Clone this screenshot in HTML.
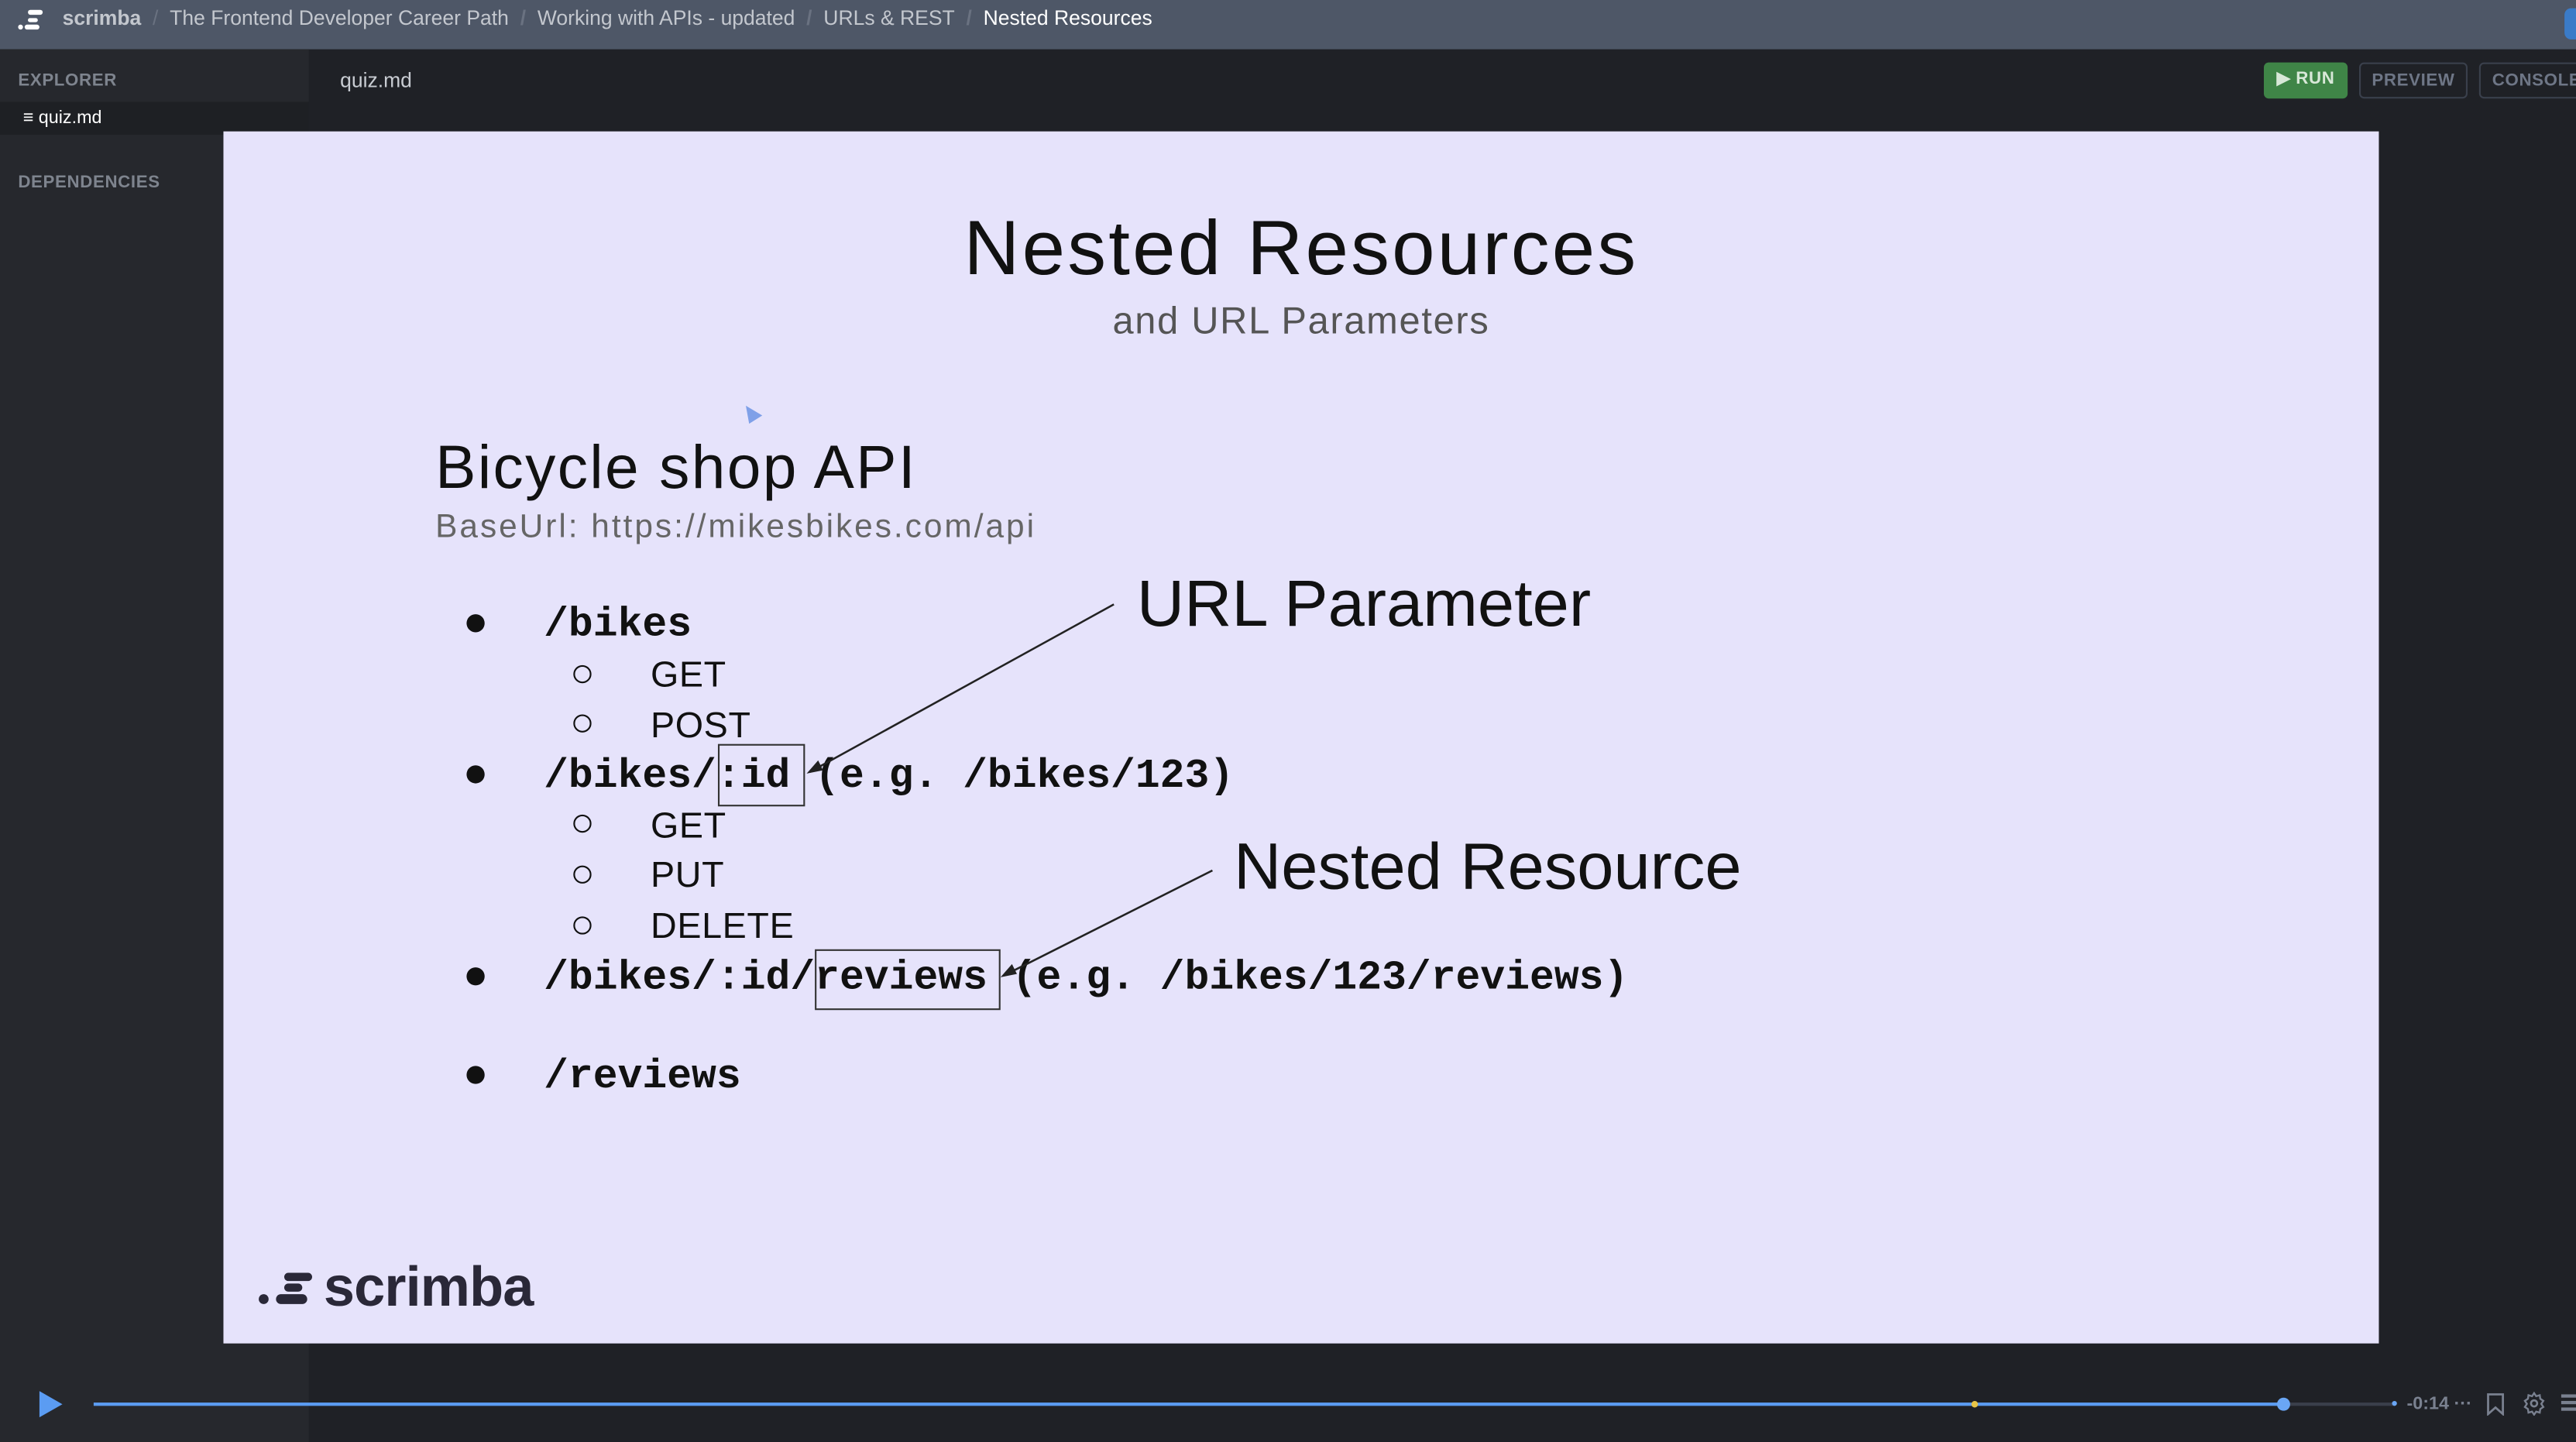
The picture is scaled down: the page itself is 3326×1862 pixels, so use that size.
<!DOCTYPE html>
<html><head><meta charset="utf-8"><style>
*{margin:0;padding:0;box-sizing:border-box}
html,body{width:3326px;height:1862px;overflow:hidden;background:#1f2126}
#w{position:absolute;left:0;top:0;width:1568px;height:878px;transform:scale(2.12117,2.1207);transform-origin:0 0;font-family:"Liberation Sans",sans-serif;background:#1f2126}
.a{position:absolute;white-space:nowrap}
.top{left:0;top:0;width:1568px;height:30px;background:#4e5767}
.bc{top:4px;font-size:12.5px;color:#b3b8c2}
.sep{color:#6a7281}
.side{left:0;top:30px;width:188px;height:848px;background:#26282d}
.lbl{font-size:10.5px;font-weight:bold;color:#7e848e;letter-spacing:.3px}
.btn{top:38px;height:22px;border-radius:3px;font-size:10.5px;font-weight:bold;line-height:20px;text-align:center;letter-spacing:.3px}
.slide{left:136px;top:80px;width:1312px;height:738px;background:#e6e3fb;overflow:hidden}
.m{font-family:"Liberation Mono",monospace;font-weight:bold;font-size:25px;color:#111}
.s{font-size:22px;color:#111;letter-spacing:.3px}
.dot{width:11px;height:11px;border-radius:50%;background:#111}
.cir{width:11px;height:11px;border-radius:50%;border:1.3px solid #111}
</style></head><body><div id="w">
<div class="a top"></div>
<svg class="a" style="left:11px;top:5px" width="20" height="14" viewBox="0 0 20 14"><rect x="6" y="1" width="9" height="3" rx="1.5" fill="#fff"/><rect x="6" y="6" width="6" height="2.5" rx="1.2" fill="#fff"/><rect x="4" y="10" width="9" height="3" rx="1.5" fill="#fff"/><circle cx="1.5" cy="11.5" r="1.5" fill="#fff"/></svg>
<div class="a bc" style="left:38px;font-weight:bold;color:#c3c7ce">scrimba <span class="sep" style="font-weight:normal">&nbsp;/&nbsp;</span> <span style="font-weight:normal">The Frontend Developer Career Path</span> <span class="sep">&nbsp;/&nbsp;</span> <span style="font-weight:normal">Working with APIs - updated</span> <span class="sep">&nbsp;/&nbsp;</span> <span style="font-weight:normal">URLs &amp; REST</span> <span class="sep">&nbsp;/&nbsp;</span> <span style="font-weight:normal;color:#fff">Nested Resources</span></div>
<div class="a" style="left:1561px;top:5px;width:12px;height:19px;border-radius:4px;background:#3a7bc8"></div>
<div class="a side"></div>
<div class="a" style="left:0;top:62px;width:188px;height:20px;background:#1e2024"></div>
<div class="a lbl" style="left:11px;top:43px">EXPLORER</div>
<div class="a" style="left:14px;top:66px;font-size:11px;color:#fff">≡ quiz.md</div>
<div class="a lbl" style="left:11px;top:105px">DEPENDENCIES</div>
<div class="a" style="left:207px;top:42px;font-size:12.5px;color:#c8ccd2">quiz.md</div>
<div class="a btn" style="left:1378px;width:51px;background:#3f8547;color:#d8e8d8">▶ RUN</div>
<div class="a btn" style="left:1436px;width:66px;border:1px solid #3a404c;color:#6e7686">PREVIEW</div>
<div class="a btn" style="left:1509px;width:70px;border:1px solid #3a404c;color:#6e7686">CONSOLE</div>

<div class="a slide">
  <div class="a" style="left:0;width:1312px;top:43px;text-align:center;font-size:47px;letter-spacing:1.5px;color:#111">Nested Resources</div>
  <div class="a" style="left:0;width:1312px;top:102px;text-align:center;font-size:23px;letter-spacing:.8px;color:#555">and URL Parameters</div>
  <svg class="a" style="left:317px;top:166px" width="12" height="14"><path d="M1 1L11 7L3 12Z" fill="#7fa0e8"/></svg>
  <div class="a" style="left:129px;top:184px;font-size:37px;letter-spacing:1.1px;color:#111">Bicycle shop API</div>
  <div class="a" style="left:129px;top:230px;font-size:20px;letter-spacing:1.4px;color:#666">BaseUrl: https://mikesbikes.com/api</div>

  <div class="a dot" style="left:148px;top:294px"></div>
  <div class="a m" style="left:195px;top:286px">/bikes</div>
  <div class="a cir" style="left:213px;top:325px"></div><div class="a s" style="left:260px;top:318px">GET</div>
  <div class="a cir" style="left:213px;top:355px"></div><div class="a s" style="left:260px;top:349px">POST</div>
  <div class="a dot" style="left:148px;top:386px"></div>
  <div class="a m" style="left:195px;top:378px">/bikes/:id (e.g. /bikes/123)</div>
  <div class="a" style="left:301px;top:373px;width:53px;height:38px;border:1.3px solid #333"></div>
  <div class="a cir" style="left:213px;top:416px"></div><div class="a s" style="left:260px;top:410px">GET</div>
  <div class="a cir" style="left:213px;top:447px"></div><div class="a s" style="left:260px;top:440px">PUT</div>
  <div class="a cir" style="left:213px;top:478px"></div><div class="a s" style="left:260px;top:471px">DELETE</div>
  <div class="a dot" style="left:148px;top:509px"></div>
  <div class="a m" style="left:195px;top:501px">/bikes/:id/reviews (e.g. /bikes/123/reviews)</div>
  <div class="a" style="left:360px;top:498px;width:113px;height:37px;border:1.3px solid #333"></div>
  <div class="a dot" style="left:148px;top:569px"></div>
  <div class="a m" style="left:195px;top:561px">/reviews</div>

  <div class="a" style="left:556px;top:266px;font-size:40px;color:#111">URL Parameter</div>
  <div class="a" style="left:615px;top:426px;font-size:40px;color:#111">Nested Resource</div>
  <svg class="a" style="left:0;top:0" width="1312" height="738">
    <line x1="542" y1="288" x2="357" y2="390" stroke="#222" stroke-width="1.2"/>
    <path d="M355 391L362 383L365 389Z" fill="#222"/>
    <line x1="602" y1="450" x2="475" y2="514" stroke="#222" stroke-width="1.2"/>
    <path d="M473 515L480 507L483 513Z" fill="#222"/>
  </svg>
  <svg class="a" style="left:21px;top:695px" width="60" height="22" viewBox="0 0 60 22"><circle cx="3.5" cy="16" r="3" fill="#2a2838"/><rect x="11" y="13" width="19" height="6" rx="3" fill="#2a2838"/><rect x="16" y="6.5" width="11" height="5" rx="2.5" fill="#2a2838"/><rect x="16" y="0" width="17" height="5" rx="2.5" fill="#2a2838"/></svg>
  <div class="a" style="left:61px;top:685px;font-size:34px;font-weight:bold;letter-spacing:-0.4px;color:#2a2838">scrimba</div>
</div>

<svg class="a" style="left:22px;top:846px" width="18" height="18"><path d="M2 1L16 9L2 17Z" fill="#5b9cf2"/></svg>
<div class="a" style="left:57px;top:854px;width:1401px;height:2px;background:#3a3f4b"></div>
<div class="a" style="left:57px;top:854px;width:1333px;height:2px;background:#5b9cf2"></div>
<div class="a" style="left:1200px;top:853px;width:4px;height:4px;border-radius:50%;background:#e8c547"></div>
<div class="a" style="left:1386px;top:851px;width:8px;height:8px;border-radius:50%;background:#6aa6f5"></div>
<div class="a" style="left:1456px;top:853px;width:3px;height:3px;border-radius:50%;background:#6aa6f5"></div>
<div class="a" style="left:1465px;top:849px;font-size:11px;font-weight:bold;color:#7a8190">-0:14 ···</div>
<svg class="a" style="left:1513px;top:848px" width="12" height="14"><path d="M1.5 1H10.5V13L6 9L1.5 13Z" fill="none" stroke="#7a8190" stroke-width="1.3"/></svg>
<svg class="a" style="left:1535px;top:847px" width="15" height="15" viewBox="0 0 24 24"><circle cx="12" cy="12" r="3" fill="none" stroke="#7a8190" stroke-width="2"/><path d="M12 2l2 3 3.5-1 .5 3.5 3 2-2 3 2 3-3 2-.5 3.5-3.5-1-2 3-2-3-3.5 1-.5-3.5-3-2 2-3-2-3 3-2 .5-3.5 3.5 1z" fill="none" stroke="#7a8190" stroke-width="1.8"/></svg>
<div class="a" style="left:1559px;top:849px;width:10px;height:1.5px;background:#7a8190;box-shadow:0 4px 0 #7a8190,0 8px 0 #7a8190"></div>
</div></body></html>
